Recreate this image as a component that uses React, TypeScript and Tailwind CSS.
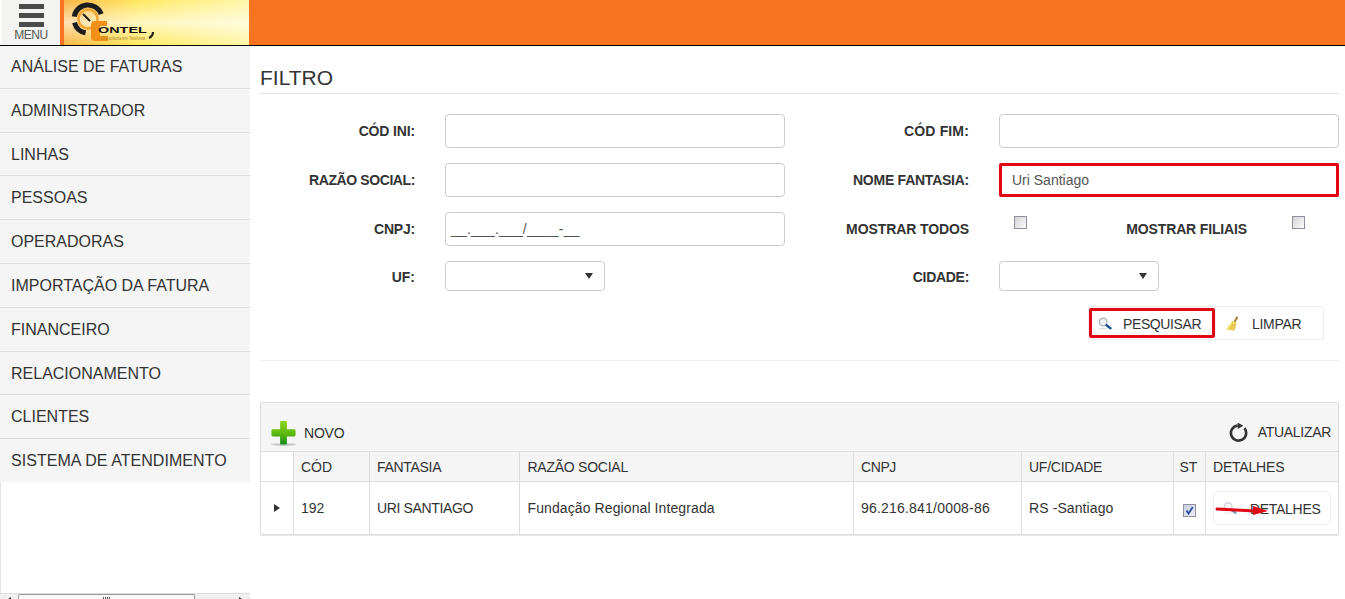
import React from "react";

const menu = [
  { t: "ANÁLISE DE FATURAS", c: "h-[43px]" },
  { t: "ADMINISTRADOR", c: "h-[44px]" },
  { t: "LINHAS", c: "h-[43px] pt-[1px]" },
  { t: "PESSOAS", c: "h-[44px]" },
  { t: "OPERADORAS", c: "h-[44px]" },
  { t: "IMPORTAÇÃO DA FATURA", c: "h-[44px]" },
  { t: "FINANCEIRO", c: "h-[44px]" },
  { t: "RELACIONAMENTO", c: "h-[43px] pt-[1px]" },
  { t: "CLIENTES", c: "h-[44px]" },
  { t: "SISTEMA DE ATENDIMENTO", c: "h-[43px] tracking-[0.05px]" },
];

function Magnifier({ className = "" }: { className?: string }) {
  return (
    <svg viewBox="0 0 14 13" className={className}>
      <circle cx="5.2" cy="5" r="3.8" fill="#f1f3f5" stroke="#b4bac2" strokeWidth="1.5" />
      <path d="M8.6 8.2 L12.4 11.2" stroke="#1f4f8f" strokeWidth="2.4" strokeLinecap="round" />
      <path d="M1 11.5 H9" stroke="#dcdcdc" strokeWidth="1" />
    </svg>
  );
}

function Broom() {
  return (
    <svg viewBox="0 0 13 15" className="w-[13px] h-[15px]">
      <path d="M10.6 0.3 L12.4 1.2 L9.4 6.6 L7.6 5.6 Z" fill="#a5813c" />
      <path d="M6.4 4.6 L10.4 6.8 C10.8 10 9.4 13 7.8 14.8 L0.4 13.6 C0.8 11.4 4.6 9 6.4 4.6 Z" fill="#f2d862" />
      <path d="M7 8 L4.6 13.6 M9 8.6 L7 14.2" stroke="#c9a534" strokeWidth="0.7" />
    </svg>
  );
}

function Plus() {
  return (
    <svg viewBox="0 0 28 28" className="w-[27px] h-[27px]">
      <defs>
        <linearGradient id="pg" x1="0" y1="0" x2="0" y2="1">
          <stop offset="0" stopColor="#8ed61c" />
          <stop offset="0.55" stopColor="#5cb80e" />
          <stop offset="1" stopColor="#0f8a1c" />
        </linearGradient>
      </defs>
      <ellipse cx="14" cy="25.5" rx="13" ry="1.5" fill="#c8c8c8" />
      <path d="M10.5 2 Q10.5 1 11.5 1 H16.5 Q17.5 1 17.5 2 V9.5 H25 Q26.5 9.5 26.5 11 V15.5 Q26.5 17 25 17 H17.5 V24.5 Q17.5 25.5 16.5 25.5 H11.5 Q10.5 25.5 10.5 24.5 V17 H3 Q1.5 17 1.5 15.5 V11 Q1.5 9.5 3 9.5 H10.5 Z" fill="url(#pg)" />
    </svg>
  );
}

function Refresh() {
  return (
    <svg viewBox="0 0 20 20" className="w-[20px] h-[20px]">
      <path d="M15.4 5.2 A7.6 7.6 0 1 1 8.6 2.5" fill="none" stroke="#333" strokeWidth="2.6" />
      <path d="M8.6 -0.4 L14.4 2.8 L8.6 6 Z" fill="#333" />
    </svg>
  );
}

function Check({ checked = false }: { checked?: boolean }) {
  return (
    <div className={`w-[13px] h-[13px] border border-[#8f8f9d] bg-gradient-to-br ${checked ? "from-[#c9d0e4] to-[#eef0f8]" : "from-[#d4d4d8] to-[#fbfbfb]"} flex items-center justify-center`}>
      {checked && (
        <svg viewBox="0 0 11 11" className="w-[11px] h-[11px]">
          <path d="M2.5 5.5 L4.5 8.5 L8.8 2" fill="none" stroke="#2f4f9a" strokeWidth="1.8" />
        </svg>
      )}
    </div>
  );
}

function Label({ children, className = "w-[155px]" }: { children: React.ReactNode; className?: string }) {
  return <div className={`${className} shrink-0 text-right font-bold text-[14px] leading-[20px] text-[#333]`}>{children}</div>;
}

function TextBox({ value = "", highlight = false, className = "w-[340px] px-[12px]" }: { value?: string; highlight?: boolean; className?: string }) {
  return (
    <div className={`${className} shrink-0 h-[34px] bg-white flex items-center text-[14px] text-[#555] ${highlight ? "border-[3px] border-[#e30613] rounded-[2px] !pl-[10px]" : "border border-[#ccc] rounded-[4px]"}`}>
      {value}
    </div>
  );
}

function SelectBox({ className = "w-[160px]" }: { className?: string }) {
  return (
    <div className={`${className} shrink-0 h-[30px] bg-white border border-[#ccc] rounded-[4px] flex items-center justify-end pr-[11px]`}>
      <div className="w-0 h-0 border-l-[4px] border-r-[4px] border-t-[6px] border-l-transparent border-r-transparent border-t-[#333]" />
    </div>
  );
}

const th = "border-r border-[#ddd] pl-[7.5px] pt-[2px] text-left font-normal text-[14px] text-[#333] bg-[#f5f5f5]";
const td = "border-r border-[#ddd] pl-[7.5px] pt-[1px] text-[14px] text-[#333]";

export default function App() {
  return (
    <div className="w-[1345px] h-[599px] overflow-hidden bg-white font-['Liberation_Sans',Arial,sans-serif] text-[#333] flex flex-col">
      <header className="h-[46px] shrink-0 bg-[#fa7320] border-b border-black flex">
        <div className="w-[60px] border-l-2 border-[#fafafa] bg-[#f3f3f1] flex flex-col items-center pt-[4px]">
          <div className="w-[25px] h-[5px] bg-[#4a4a4a]" />
          <div className="w-[25px] h-[5px] bg-[#4a4a4a] mt-[4px]" />
          <div className="w-[25px] h-[5px] bg-[#4a4a4a] mt-[4px]" />
          <div className="text-[12px] leading-[12px] mt-[2px] text-[#555] tracking-[-0.4px]">MENU</div>
        </div>
        <div className="ml-[4px] w-[185px] h-[45px] bg-gradient-to-r from-[#f9b544] via-[#ffe95e] via-40% to-[#fff6a8] relative overflow-hidden">
          <div className="absolute inset-0 bg-gradient-to-b from-transparent via-white/60 to-transparent" />
          <svg viewBox="0 0 185 45" className="absolute left-0 top-0 w-[185px] h-[45px]">
            <circle cx="24" cy="19" r="9.5" fill="none" stroke="#f2a531" strokeWidth="2.5" />
            <path d="M10.2 16.6 A14 14 0 0 1 37.2 14.2" fill="none" stroke="#1d1d1d" strokeWidth="5" />
            <path d="M10.5 22.6 A14 14 0 0 0 21.6 32.8" fill="none" stroke="#1d1d1d" strokeWidth="5" />
            <path d="M19 14 L26 21" stroke="#1d1d1d" strokeWidth="2" />
            <path d="M31 21 H43 V26 H36 V36 H44 V41 H31 Q27 41 27 37 V25 Q27 21 31 21Z" fill="#f29018" />
            <path d="M85 38 Q89 36 89 32" stroke="#222" strokeWidth="2.2" fill="none" />
          </svg>
          <div className="absolute left-[34px] top-[26px] text-[9px] leading-[9px] font-bold text-[#111] scale-x-[1.6] origin-left">ONTEL</div>
          <div className="absolute left-[37px] top-[36px] text-[5px] leading-[5px] text-[#b08a28] scale-x-[0.8] origin-left whitespace-nowrap">Consultoria em Telefonia</div>
        </div>
      </header>
      <div className="flex flex-1 min-h-0">
        <aside className="w-[250px] shrink-0 flex flex-col justify-between border-l border-[#e4e4e4]">
          <nav className="bg-[#f5f5f5] -ml-px">
            {menu.map((m) => (
              <div key={m.t} className={`${m.c} pl-[11px] flex items-center text-[16px] text-[#333] border-b border-[#ddd] last:border-b-0`}>{m.t}</div>
            ))}
          </nav>
          <div className="h-[6px] bg-[#f0f0f0] border-t border-[#ddd] -ml-px flex relative">
            <div className="absolute left-[8px] top-[3px] w-0 h-0 border-t-[2px] border-b-[2px] border-r-[3px] border-t-transparent border-b-transparent border-r-[#333]" />
            <div className="w-[18px]" />
            <div className="w-[177px] bg-[#f8f8f8] border border-[#999] border-b-0 rounded-t-[2px] flex justify-center gap-[1px] pt-[2px]">
              <div className="w-[1px] h-[3px] bg-[#555]" />
              <div className="w-[1px] h-[3px] bg-[#555]" />
              <div className="w-[1px] h-[3px] bg-[#555]" />
              <div className="w-[1px] h-[3px] bg-[#555]" />
            </div>
            <div className="absolute left-[239px] top-[3px] w-0 h-0 border-t-[2px] border-b-[2px] border-l-[3px] border-t-transparent border-b-transparent border-l-[#333]" />
          </div>
        </aside>
        <main className="flex-1 pl-[10px] pr-[6px]">
          <h1 className="text-[21px] leading-[22px] mt-[21px] pb-[4px] border-b border-[#e5e5e5] text-[#333]">FILTRO</h1>
          <div className="mt-[20px] flex items-center">
            <Label className="w-[155px] tracking-[-0.15px]">CÓD INI:</Label>
            <div className="w-[30px]" />
            <TextBox />
            <Label className="w-[184px] tracking-[0.15px]">CÓD FIM:</Label>
            <div className="w-[30px]" />
            <TextBox />
          </div>
          <div className="mt-[15px] flex items-center">
            <Label className="w-[155px] tracking-[-0.4px]">RAZÃO SOCIAL:</Label>
            <div className="w-[30px]" />
            <TextBox />
            <Label className="w-[184px] tracking-[-0.25px]">NOME FANTASIA:</Label>
            <div className="w-[30px]" />
            <TextBox value="Uri Santiago" highlight />
          </div>
          <div className="mt-[15px] flex items-center">
            <Label className="w-[155px] tracking-[-0.2px]">CNPJ:</Label>
            <div className="w-[30px]" />
            <TextBox value="__.___.___/____-__" className="w-[340px] pl-[5px] tracking-[0.18px]" />
            <Label className="w-[184px] tracking-[-0.1px]">MOSTRAR TODOS</Label>
            <div className="w-[45px] pl-[45px] -mt-[14px]"><Check /></div>
            <div className="w-[233px] text-right font-bold text-[14px] leading-[20px] text-[#333] shrink-0 tracking-[-0.15px]">MOSTRAR FILIAIS</div>
            <div className="ml-[45px] -mt-[14px]"><Check /></div>
          </div>
          <div className="mt-[15px] flex items-center">
            <Label className="w-[155px] mt-[2px]">UF:</Label>
            <div className="w-[30px]" />
            <SelectBox />
            <Label className="w-[364px] mt-[2px] tracking-[-0.3px]">CIDADE:</Label>
            <div className="w-[30px]" />
            <SelectBox />
          </div>
          <div className="mt-[15px] flex justify-end pr-[15px]">
            <div className="relative h-[34px] w-[128px] border border-[#eee] rounded-l-[4px] flex items-center text-[14px] text-[#333] bg-white">
              <Magnifier className="w-[14px] h-[13px] ml-[9px]" />
              <span className="ml-[11px] pt-[2px] tracking-[-0.4px]">PESQUISAR</span>
              <div className="absolute left-0 top-[1px] w-[126px] h-[30px] border-[3px] border-[#e30613] rounded-[2px]" />
            </div>
            <div className="h-[34px] w-[108px] border border-[#eee] border-l-0 rounded-r-[4px] flex items-center text-[14px] text-[#333] bg-white">
              <div className="ml-[10px] flex"><Broom /></div>
              <span className="ml-[13px] pt-[2px] tracking-[-0.3px]">LIMPAR</span>
            </div>
          </div>
          <div className="mt-[20px] border-t border-[#eee]" />
          <section className="mt-[41px] border border-[#ddd] rounded-[2px] shadow-[0_1px_1px_rgba(0,0,0,0.1)] overflow-hidden">
            <div className="h-[49px] bg-[#f5f5f5] border-b border-[#ddd] flex items-end justify-between pb-[4px] pl-[9px] pr-[7px]">
              <div className="flex items-center text-[14px]"><Plus /><span className="ml-[7px] tracking-[-0.2px]">NOVO</span></div>
              <div className="flex items-center text-[14px] mb-[4px]"><Refresh /><span className="ml-[9px] tracking-[-0.3px]">ATUALIZAR</span></div>
            </div>
            <table className="w-full table-fixed border-collapse">
              <colgroup>
                <col className="w-[32px]" /><col className="w-[76px]" /><col className="w-[150px]" /><col className="w-[334px]" /><col className="w-[168px]" /><col className="w-[152px]" /><col className="w-[32px]" /><col />
              </colgroup>
              <thead>
                <tr className="h-[29px] border-b border-[#ddd]">
                  <th className="border-r border-[#ddd] bg-white" />
                  <th className={th}>CÓD</th>
                  <th className={`${th} tracking-[-0.3px]`}>FANTASIA</th>
                  <th className={`${th} !pl-[8px] tracking-[-0.25px]`}>RAZÃO SOCIAL</th>
                  <th className={`${th} tracking-[-0.4px]`}>CNPJ</th>
                  <th className={`${th} tracking-[-0.25px]`}>UF/CIDADE</th>
                  <th className={`${th} !pl-[6px]`}>ST</th>
                  <th className={`${th} border-r-0 tracking-[-0.2px]`}>DETALHES</th>
                </tr>
              </thead>
              <tbody>
                <tr className="h-[53px]">
                  <td className="border-r border-[#ddd]">
                    <div className="ml-[13px] w-0 h-0 border-t-[4px] border-b-[4px] border-l-[6px] border-t-transparent border-b-transparent border-l-[#333]" />
                  </td>
                  <td className={td}>192</td>
                  <td className={`${td} tracking-[-0.35px]`}>URI SANTIAGO</td>
                  <td className={`${td} !pl-[8px] tracking-[0.1px]`}>Fundação Regional Integrada</td>
                  <td className={`${td} tracking-[0.2px]`}>96.216.841/0008-86</td>
                  <td className={`${td} tracking-[0.1px]`}>RS -Santiago</td>
                  <td className="border-r border-[#ddd]"><div className="flex justify-center pl-[1px] pt-[5px]"><Check checked /></div></td>
                  <td className="pl-[7.5px] pt-[1px] text-[14px]">
                    <div className="relative h-[34px] w-[118px] border border-[#eee] rounded-[4px] flex items-center">
                      <Magnifier className="w-[14px] h-[14px] ml-[9px] opacity-60" />
                      <span className="ml-[13px] pt-[2px] tracking-[-0.3px]">DETALHES</span>
                      <svg viewBox="0 0 54 11" className="absolute left-[1px] top-[13px] w-[54px] h-[11px]">
                        <path d="M2 4 L40 6" stroke="#e30613" strokeWidth="3" strokeLinecap="round" />
                        <path d="M38 1 L53 6 L38 10 Z" fill="#e30613" />
                      </svg>
                    </div>
                  </td>
                </tr>
              </tbody>
            </table>
          </section>
        </main>
      </div>
    </div>
  );
}
